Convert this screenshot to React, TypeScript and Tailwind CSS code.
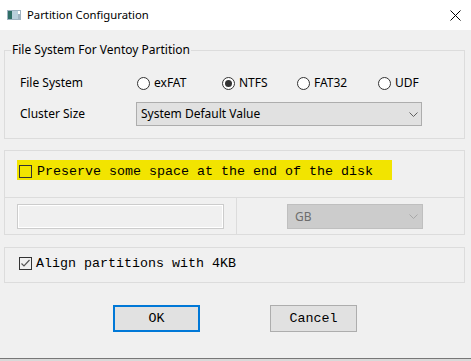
import React from 'react'

const ui = { fontFamily: '"Noto Sans", "Open Sans", Arial, sans-serif' }
const mono = { fontFamily: '"Liberation Mono", "Courier New", monospace' }

function Radio({ label, checked, width }: { label: string; checked?: boolean; width: string }) {
  return (
    <div className={`flex items-center ${width}`}>
      <span className="ml-[1px] flex h-[13px] w-[13px] items-center justify-center rounded-full border border-[#333] bg-white">
        {checked && <span className="h-[7px] w-[7px] rounded-full bg-[#333]" />}
      </span>
      <span className="ml-[4px] text-[12px] leading-[16px] text-black">{label}</span>
    </div>
  )
}

function Chevron({ color }: { color: string }) {
  return (
    <svg width="9" height="5" viewBox="0 0 9 5" fill="none">
      <path d="M0.5 0.5 L4.5 4.5 L8.5 0.5" stroke={color} strokeWidth="1" />
    </svg>
  )
}

function Checkbox({ checked }: { checked?: boolean }) {
  return (
    <span className="flex h-[13px] w-[13px] shrink-0 items-center justify-center border border-[#333]">
      {checked && (
        <svg width="11" height="11" viewBox="0 0 11 11" fill="none">
          <path d="M1.5 5.5 L4 8 L9.5 2" stroke="#555" strokeWidth="1.2" />
        </svg>
      )}
    </span>
  )
}

export default function App() {
  return (
    <div className="h-[361px] w-[471px] overflow-hidden bg-[#f0f0f0] text-black" style={ui}>
      {/* title bar */}
      <div className="flex h-[30px] items-center bg-white">
        <svg className="ml-[7px]" width="14" height="10" viewBox="0 0 14 10">
          <rect x="0" y="0" width="14" height="10" fill="#9fb3c2" />
          <rect x="1" y="1" width="4" height="8" fill="#2f6e66" />
          <rect x="5" y="1" width="6" height="8" fill="#b9cfdc" />
          <rect x="11" y="1" width="2" height="3" fill="#ffffff" />
        </svg>
        <span className="ml-[6px] text-[11.3px] leading-[16px]">Partition Configuration</span>
        <svg className="ml-auto mr-[10px]" width="11" height="11" viewBox="0 0 11 11">
          <path d="M0.5 0.5 L10.5 10.5 M10.5 0.5 L0.5 10.5" stroke="#000" strokeWidth="1" />
        </svg>
      </div>

      <div className="px-[4px]">
        {/* file system group */}
        <fieldset className="mt-[12px] w-[461px] border border-[#dcdcdc]">
          <legend className="ml-[6px] px-[1px] text-[12px] leading-[16px]">File System For Ventoy Partition</legend>
          <div className="pb-[12px] pl-[15px] pt-[13px]">
            <div className="flex h-[24px] items-center">
              <span className="w-[116px] text-[12px] leading-[16px]">File System</span>
              <Radio label="exFAT" width="w-[85px]" />
              <Radio label="NTFS" checked width="w-[75px]" />
              <Radio label="FAT32" width="w-[81px]" />
              <Radio label="UDF" width="w-[60px]" />
            </div>
            <div className="mt-[7px] flex h-[24px] items-center">
              <span className="w-[116px] text-[12px] leading-[16px]">Cluster Size</span>
              <div className="flex h-[24px] w-[286px] items-center justify-between border border-[#adadad] bg-[#e1e1e1] pl-[4px] pr-[3px]">
                <span className="text-[12px] leading-[16px]">System Default Value</span>
                <Chevron color="#606060" />
              </div>
            </div>
          </div>
        </fieldset>

        {/* preserve space group */}
        <div className="mt-[11px] w-[461px] border border-[#dcdcdc]">
          <div className="h-[46px] pl-[12px] pt-[9px]">
            <div className="flex h-[20px] w-[375px] items-center bg-[#f2e400] pl-[2px] pt-[3px]" style={mono}>
              <Checkbox />
              <span className="ml-[5px] text-[13.33px] leading-[16px]">Preserve some space at the end of the disk</span>
            </div>
          </div>
          <div className="flex h-[37px] border-t border-[#dcdcdc]">
            <div className="w-[232px] border-r border-[#dcdcdc] pl-[12px] pt-[6px]">
              <div className="h-[25px] w-[207px] border border-[#cccccc] bg-[#f0f0f0] shadow-[inset_0_0_0_1px_#ffffff]" />
            </div>
            <div className="pl-[50px] pt-[6px]">
              <div className="flex h-[25px] w-[136px] items-center justify-between border border-[#bfbfbf] bg-[#cccccc] pl-[7px] pr-[4px]">
                <span className="text-[12px] leading-[16px] text-[#6d6d6d]">GB</span>
                <Chevron color="#a8a8a8" />
              </div>
            </div>
          </div>
        </div>

        {/* align group */}
        <div className="mt-[12px] flex h-[36px] w-[461px] items-start border border-[#dcdcdc] pl-[14px] pt-[9px]" style={mono}>
          <Checkbox checked />
          <span className="ml-[4px] text-[13.33px] leading-[14px]">Align partitions with 4KB</span>
        </div>

        {/* buttons */}
        <div className="mt-[22px] flex pl-[109px]" style={mono}>
          <button className="h-[27px] w-[87px] border-2 border-[#0078d7] bg-[#e1e1e1] text-[13.33px] leading-[16px]">
            OK
          </button>
          <button className="ml-[70px] h-[27px] w-[87px] border border-[#adadad] bg-[#e1e1e1] text-[13.33px] leading-[16px]">
            Cancel
          </button>
        </div>
      </div>

      <div className="mt-[26px] h-[1px] bg-[#777777]" />
      <div className="h-[3px] bg-[#d9d9d9]" />
    </div>
  )
}
